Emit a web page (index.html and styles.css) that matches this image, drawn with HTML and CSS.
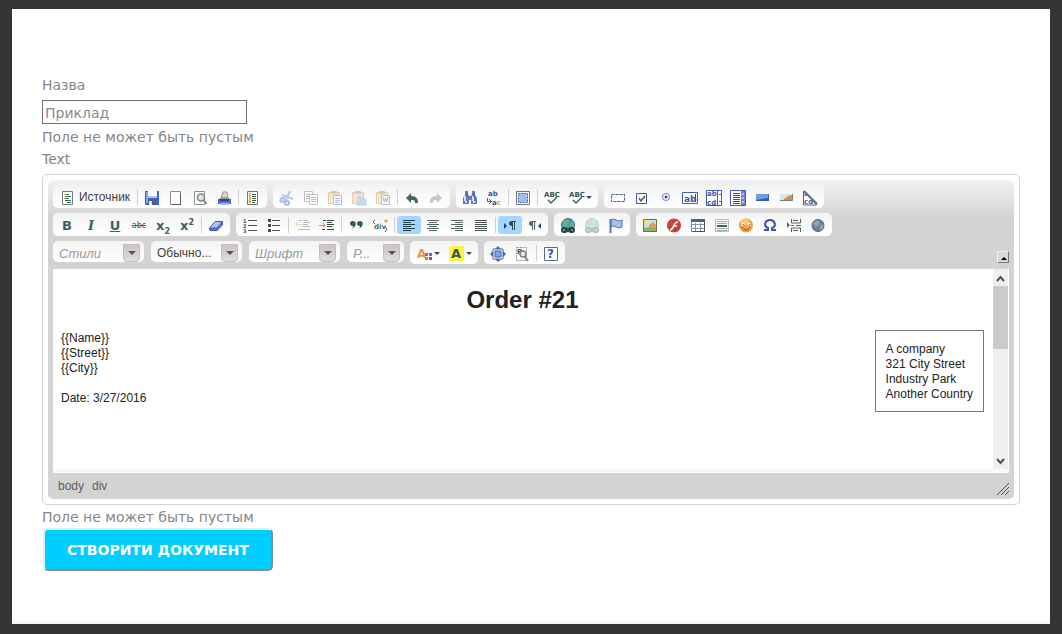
FILE: index.html
```html
<!DOCTYPE html>
<html lang="uk">
<head>
<meta charset="utf-8">
<title>Створити документ</title>
<link rel="stylesheet" href="styles.css">
</head>
<body>
<main class="page">
<form class="form">
  <label class="line" for="name">Назва</label>
  <input class="name" id="name" type="text" placeholder="Приклад">
  <p class="line">Поле не может быть пустым</p>
  <p class="line" id="text-label">Text</p>

  <section class="editor" aria-labelledby="text-label">
    <div class="chrome">
      <div class="toolbar">
        <div class="row">
          <div class="group">
            <button type="button" class="tool source"><svg class="ic" viewBox="0 0 16 16"><path d="M2.500 1.500h10v13h-10z" fill="#fff" stroke="#6d7f78"/><path d="M5 4.500h4M5 6.500h6M5 8.500h4M5 10.500h6M7 12.500h4" stroke="#3c625a"/><path d="M4 4.500h2M4 8.500h1" stroke="#e0b54a"/></svg><span>Источник</span></button>
            <i class="sep"></i>
            <button type="button" class="tool" aria-label="Сохранить"><svg class="ic" viewBox="0 0 16 16"><path d="M1 1h14v14H2l-1-1z" fill="#3a62d6"/><path d="M2 2h2v11H2z" fill="#83a6f4"/><path d="M4 1h9v7H4z" fill="#f4f8ff"/><path d="M4 6h9v2H4z" fill="#a6c9ee"/><path d="M4 10h8v5H4z" fill="#4e5f83"/><path d="M5 11h3v4H5z" fill="#dce8f8"/></svg></button>
            <button type="button" class="tool" aria-label="Новая страница"><svg class="ic" viewBox="0 0 16 16"><path d="M2.500 1.500h10v13h-10z" fill="#fff" stroke="#8c9490"/><path d="M12.500 4v11M4 14.500h9" stroke="#51635d"/></svg></button>
            <button type="button" class="tool" aria-label="Предварительный просмотр"><svg class="ic" viewBox="0 0 16 16"><path d="M2.500 1.500h10v13h-10z" fill="#fff" stroke="#8c9490"/><circle cx="9" cy="7.500" r="3.500" fill="#dfe8e8" stroke="#7b8784" stroke-width="1.500"/><path d="M11.500 10l3 4" stroke="#9c8158" stroke-width="2"/></svg></button>
            <button type="button" class="tool" aria-label="Печать"><svg class="ic" viewBox="0 0 16 16"><path d="M5 8l2-6h4l1 6z" fill="#e5d3c6" stroke="#a98f86"/><path d="M2 10l3-3h7l3 3z" fill="#9b9db4"/><path d="M2 9h13v5H2z" fill="#4d6fc8"/><path d="M4 9h9v2H4z" fill="#303f81"/><path d="M4 13h9v2H4z" fill="#a5bce9"/></svg></button>
            <i class="sep"></i>
            <button type="button" class="tool" aria-label="Шаблоны"><svg class="ic" viewBox="0 0 16 16"><path d="M2.500 1.500h10v13h-10z" fill="#fff" stroke="#6a7a74"/><path d="M5 3v10" stroke="#e0b54a" stroke-width="2"/><path d="M7 4.500h4M7 6.500h4M7 8.500h4M7 10.500h4M7 12.500h3" stroke="#3c544b"/></svg></button>
          </div>
          <div class="group">
            <button type="button" class="tool off" aria-label="Вырезать"><svg class="ic" viewBox="0 0 16 16" fill="none"><path d="M11 1L7 10M3 5l11 4" stroke="#5383c5" stroke-width="2"/><circle cx="3.500" cy="10" r="2" stroke="#3660c2" stroke-width="2"/><circle cx="8" cy="13" r="2" stroke="#3660c2" stroke-width="2"/></svg></button>
            <button type="button" class="tool off" aria-label="Копировать"><svg class="ic" viewBox="0 0 16 16" fill="#fff" stroke="#60736d"><path d="M1.500 1.500h8v10h-8z"/><path d="M6.500 4.500h8v10h-8z"/><path d="M3 4.500h3M3 6.500h3M3 8.500h3M8 7.500h5M8 9.500h5M8 11.500h5"/></svg></button>
            <button type="button" class="tool off" aria-label="Вставить"><svg class="ic" viewBox="0 0 16 16"><path d="M1.500 2.500h11v11h-11z" fill="#f0c58e" stroke="#c78a42"/><path d="M4 1h6v3H4z" fill="#8792a0"/><path d="M6.500 5.500h8v9h-8z" fill="#fff" stroke="#4a69b3"/><path d="M8 8.500h5M8 10.500h5M8 12.500h4" stroke="#4a69b3"/></svg></button>
            <button type="button" class="tool off" aria-label="Вставить только текст"><svg class="ic" viewBox="0 0 16 16"><path d="M1.500 2.500h11v11h-11z" fill="#f0c58e" stroke="#c78a42"/><path d="M4 1h6v3H4z" fill="#8792a0"/><path d="M7 7h4l4 3v5H6z" fill="#6da9e6" stroke="#6397cc"/></svg></button>
            <button type="button" class="tool off" aria-label="Вставить из Word"><svg class="ic" viewBox="0 0 16 16"><path d="M1.500 2.500h11v11h-11z" fill="#f0c58e" stroke="#c78a42"/><path d="M4 1h6v3H4z" fill="#8792a0"/><path d="M6.500 5.500h8v9h-8z" fill="#fff" stroke="#4a69b3"/><path d="M8 7l1 5 1.500-4 1.500 4 1-5" fill="none" stroke="#46536e"/></svg></button>
            <i class="sep"></i>
            <button type="button" class="tool" aria-label="Отменить"><svg class="ic" viewBox="0 0 16 16"><path d="M2 8l5-5v3c5 0 7 2 7 7h-3c0-3-1-3-4-3v3z" fill="#486760"/></svg></button>
            <button type="button" class="tool off" aria-label="Повторить"><svg class="ic" viewBox="0 0 16 16"><path d="M14 8L9 3v3c-5 0-7 2-7 7h3c0-3 1-3 4-3v3z" fill="#6b827c"/></svg></button>
          </div>
          <div class="group">
            <button type="button" class="tool" aria-label="Найти"><svg class="ic" viewBox="0 0 16 16"><path d="M3 1h3v3l1 2h2l1-2V1h3v4l2 3v6H9v-4H7v4H1V8l2-3z" fill="#6379c6"/><path d="M3 6v5M11 6v5M3 12h2M11 12h2" stroke="#d3ddff" stroke-width="2"/><path d="M5 3v4M12 3v4" stroke="#3f4ea1"/></svg></button>
            <button type="button" class="tool" aria-label="Заменить"><svg class="ic" viewBox="0 0 16 16"><text x="2" y="6" class="t7 indigo">ab</text><text x="6" y="15" class="t7 indigo">a<tspan class="gold">c</tspan></text><path d="M1.500 8v3.500H5M3 9l2.500 2.500L3 14" fill="none" stroke="#4055a9"/></svg></button>
            <i class="sep"></i>
            <button type="button" class="tool" aria-label="Выделить все"><svg class="ic" viewBox="0 0 16 16"><path d="M1.500 1.500h13v13h-13z" fill="#f6faff" stroke="#6b7b75"/><path d="M4 4h8v8H4z" fill="#a3bef0"/><path d="M3.500 3.500h9v9h-9z" fill="none" stroke="#36569b" stroke-dasharray="2 1"/></svg></button>
            <i class="sep"></i>
            <button type="button" class="tool" aria-label="Проверить орфографию"><svg class="ic" viewBox="0 0 16 16"><text x="0" y="7" class="t7 green">ABC</text><path d="M4 10l3 3 6-6" fill="none" stroke="#42645c" stroke-width="1.500"/></svg></button>
            <button type="button" class="tool wide" aria-label="Проверка по мере ввода"><svg class="ic" viewBox="0 0 16 16"><text x="0" y="7" class="t7 green">ABC</text><path d="M4 10l3 3 6-6" fill="none" stroke="#42645c" stroke-width="1.500"/></svg><i class="caret"></i></button>
          </div>
          <div class="group">
            <button type="button" class="tool" aria-label="Форма"><svg class="ic" viewBox="0 0 16 16"><path d="M1.500 4.500h13v7h-13z" fill="none" stroke="#4559b0" stroke-dasharray="3 1"/></svg></button>
            <button type="button" class="tool" aria-label="Чекбокс"><svg class="ic" viewBox="0 0 16 16" fill="none"><path d="M2.500 3.500h10v10h-10z" stroke="#4456ac"/><path d="M5 8l2 3 4-5" stroke="#50615d" stroke-width="1.500"/></svg></button>
            <button type="button" class="tool" aria-label="Радиокнопка"><svg class="ic" viewBox="0 0 16 16"><circle cx="8" cy="7" r="3.500" fill="#fff" stroke="#6b7bbb"/><circle cx="8" cy="7" r="1.500" fill="#354aa2"/></svg></button>
            <button type="button" class="tool" aria-label="Текстовое поле"><svg class="ic" viewBox="0 0 16 16"><path d="M.5 2.500h15v11H.5z" fill="#fff" stroke="#4659b8"/><text x="2" y="12" class="t9 indigo">ab</text><path d="M13.500 4v8" stroke="#354aa2"/></svg></button>
            <button type="button" class="tool" aria-label="Многострочное поле"><svg class="ic" viewBox="0 0 16 16"><path d="M.5.5h15v15H.5z" fill="#fff" stroke="#4659b8"/><text x="1" y="6" class="t7 indigo">ab</text><text x="1" y="15" class="t7 indigo">cd</text><path d="M11.500 1v14M13 4.500h2M13 11.500h2" stroke="#4659b8"/></svg></button>
            <button type="button" class="tool" aria-label="Выпадающий список"><svg class="ic" viewBox="0 0 16 16"><path d="M.5.5h15v15H.5z" fill="#fff" stroke="#4659b8"/><path d="M3 3.500h7M3 5.500h7M3 7.500h7M3 9.500h7M3 11.500h7M3 13.500h7" stroke="#40516e"/><path d="M11 1h4v14h-4z" fill="#7082ca"/><path d="M12 4h2M12 8h2M12 12h2" stroke="#fff"/></svg></button>
            <button type="button" class="tool" aria-label="Кнопка"><svg class="ic" viewBox="0 0 16 16"><path d="M2 4h13v7H2z" fill="#315eb5"/><path d="M2 4h12v4L2 10z" fill="#6f9ae6"/></svg></button>
            <button type="button" class="tool" aria-label="Кнопка-изображение"><svg class="ic" viewBox="0 0 16 16"><path d="M2 4h13v7H2z" fill="#d6e5ea"/><path d="M6 9l4-3 4-1v6H6z" fill="#dc8c47"/><path d="M2 10.500h12.500V4" fill="none" stroke="#6e8880"/></svg></button>
            <button type="button" class="tool" aria-label="Скрытое поле"><svg class="ic" viewBox="0 0 16 16"><path d="M1.500 1v14h13z" fill="#fff" stroke="#4659b8"/><text x="2" y="6" class="t6 indigo">a</text><text x="2" y="14" class="t7 indigo">cd</text><path d="M2 1l13 13" stroke="#647a77" stroke-width="2"/></svg></button>
          </div>
        </div>

        <div class="row">
          <div class="group">
            <button type="button" class="tool letter" aria-label="Полужирный"><b>B</b></button>
            <button type="button" class="tool letter" aria-label="Курсив"><em>I</em></button>
            <button type="button" class="tool letter" aria-label="Подчеркнутый"><u>U</u></button>
            <button type="button" class="tool letter" aria-label="Зачеркнутый"><s>abc</s></button>
            <button type="button" class="tool letter" aria-label="Подстрочный индекс"><span>x<sub>2</sub></span></button>
            <button type="button" class="tool letter" aria-label="Надстрочный индекс"><span>x<sup>2</sup></span></button>
            <i class="sep"></i>
            <button type="button" class="tool" aria-label="Убрать форматирование"><svg class="ic" viewBox="0 0 16 16"><path d="M2 10l5-6h7l-5 6z" fill="#aac5f5"/><path d="M2 10h7v3H2zM9 10l5-6v3l-5 6z" fill="#5b79d0"/><path d="M1.500 10L7 3.500h7.500V7L9 12.500H2zM2 10h7l5-6" fill="none" stroke="#405bae"/></svg></button>
          </div>
          <div class="group">
            <button type="button" class="tool" aria-label="Нумерованный список"><svg class="ic" viewBox="0 0 16 16"><text x="1" y="5" class="t5 green">1</text><text x="1" y="10" class="t5 green">2</text><text x="1" y="15" class="t5 green">3</text><path d="M6 2.500h9M6 7.500h9M6 12.500h9" stroke="#4a5a55"/></svg></button>
            <button type="button" class="tool" aria-label="Маркированный список"><svg class="ic" viewBox="0 0 16 16"><path d="M2 1h3v3H2zM2 6h3v3H2zM2 11h3v3H2z" fill="#3c544b"/><path d="M6 2.500h8M6 7.500h8M6 12.500h8" stroke="#4a5a55"/></svg></button>
            <i class="sep"></i>
            <button type="button" class="tool off" aria-label="Уменьшить отступ"><svg class="ic" viewBox="0 0 16 16"><path d="M4 2.500h3M8 2.500h5M8 4.500h7M8 6.500h5M8 8.500h7M3 11.500h12" stroke="#4b6860"/><path d="M7 6.500H1M3 4L1 6.500 3 9" fill="none" stroke="#dca13e"/></svg></button>
            <button type="button" class="tool" aria-label="Увеличить отступ"><svg class="ic" viewBox="0 0 16 16"><path d="M4 2.500h3M8 2.500h7M8 4.500h5M8 6.500h7M8 8.500h5M3 11.500h3M8 11.500h7" stroke="#304b43"/><path d="M0 7.500h6M4 5l2 2.500L4 10" fill="none" stroke="#dc8b2e"/></svg></button>
            <i class="sep"></i>
            <button type="button" class="tool" aria-label="Цитата"><svg class="ic" viewBox="0 0 16 16"><path d="M3 11c2-1 2-2 2-3-4 0-4-5 0-5s4 6-2 8zM10 11c2-1 2-2 2-3-4 0-4-5 0-5s4 6-2 8z" fill="#35584f"/></svg></button>
            <button type="button" class="tool" aria-label="Добавить DIV"><svg class="ic" viewBox="0 0 16 16"><path d="M3 2L1 4l2 2M13 9l2 2-2 3" fill="none" stroke="#536c65"/><text x="2" y="11" class="t7 slate">div</text><path d="M14 1l2 2-2 2-2-2z" fill="#e3a445"/></svg></button>
            <i class="sep"></i>
            <button type="button" class="tool on" aria-label="По левому краю"><svg class="ic" viewBox="0 0 16 16"><path d="M2 2.500h12M2 4.500h8M2 6.500h12M2 8.500h8M2 10.500h12M2 12.500h8" stroke="#213e4b"/></svg></button>
            <button type="button" class="tool" aria-label="По центру"><svg class="ic" viewBox="0 0 16 16"><path d="M2 2.500h12M4 4.500h8M2 6.500h12M4 8.500h8M2 10.500h12M4 12.500h8" stroke="#56645f"/></svg></button>
            <button type="button" class="tool" aria-label="По правому краю"><svg class="ic" viewBox="0 0 16 16"><path d="M2 2.500h12M6 4.500h8M2 6.500h12M6 8.500h8M2 10.500h12M6 12.500h8" stroke="#56645f"/></svg></button>
            <button type="button" class="tool" aria-label="По ширине"><svg class="ic" viewBox="0 0 16 16"><path d="M2 2.500h12M2 4.500h12M2 6.500h12M2 8.500h12M2 10.500h12M2 12.500h12" stroke="#46564f"/></svg></button>
            <i class="sep"></i>
            <button type="button" class="tool on" aria-label="Слева направо"><svg class="ic" viewBox="0 0 16 16"><path d="M2 5l3 3-3 3z" fill="#26369c"/><path d="M10 3c-4 0-4 5 0 5v4h1V4h1v8h1V4h1V3z" fill="#304b43"/></svg></button>
            <button type="button" class="tool" aria-label="Справа налево"><svg class="ic" viewBox="0 0 16 16"><path d="M15 5l-3 3 3 3z" fill="#26369c"/><path d="M6 3C2 3 2 8 6 8v4h1V4h1v8h1V4h1V3z" fill="#536862"/></svg></button>
          </div>
          <div class="group">
            <button type="button" class="tool" aria-label="Вставить ссылку"><svg class="ic" viewBox="0 0 16 16"><circle cx="8" cy="7" r="6.500" fill="#4b9fbc" stroke="#356b87"/><path d="M3 3l4-2 2 3-3 5-4-1zM10 6l4-2v5h-3z" fill="#6daf74"/><g fill="none" stroke="#29473e" stroke-width="2"><rect x="2" y="10" width="5" height="4" rx="2"/><rect x="9" y="10" width="5" height="4" rx="2"/><path d="M5 12h6"/></g></svg></button>
            <button type="button" class="tool off" aria-label="Убрать ссылку"><svg class="ic" viewBox="0 0 16 16"><circle cx="8" cy="7" r="6.500" fill="#8fc6d8" stroke="#5b91a7"/><path d="M3 3l4-2 2 3-3 5-4-1zM10 6l4-2v5h-3z" fill="#8bc091"/><g fill="none" stroke="#4b6860" stroke-width="2"><rect x="2" y="10" width="5" height="4" rx="2"/><rect x="9" y="10" width="5" height="4" rx="2"/></g></svg></button>
            <button type="button" class="tool" aria-label="Вставить якорь"><svg class="ic" viewBox="0 0 16 16"><path d="M3 2c4-3 6 3 11 0v7c-5 3-7-3-11 0z" fill="#a8c0ef" stroke="#5568bd"/><path d="M2.500 1v14" stroke="#6171b8" stroke-width="2"/></svg></button>
          </div>
          <div class="group">
            <button type="button" class="tool" aria-label="Изображение"><svg class="ic" viewBox="0 0 16 16"><path d="M1.500 1.500h13v12h-13z" fill="#c5e1ef" stroke="#647746"/><path d="M2 2h5L2 8z" fill="#f3dc69"/><path d="M2 10l12-2v5H2z" fill="#8fb267"/><path d="M7 7l4-3 3 3v3H8z" fill="#e19a58"/></svg></button>
            <button type="button" class="tool" aria-label="Flash"><svg class="ic" viewBox="0 0 16 16"><circle cx="8" cy="7.500" r="7" fill="#c5433b"/><path d="M4 12c4 0 3-8 8-8M7 8h4" fill="none" stroke="#fff" stroke-width="1.500"/></svg></button>
            <button type="button" class="tool" aria-label="Таблица"><svg class="ic" viewBox="0 0 16 16"><path d="M1.500 2.500h13v11h-13zM2 6.500h12M2 10.500h12M5.500 5v9M10.500 5v9" fill="#fff" stroke="#8290a2"/><path d="M1 1h14v3H1z" fill="#49618c"/><path d="M14.500 4v9.500H2" fill="none" stroke="#49564f"/></svg></button>
            <button type="button" class="tool" aria-label="Горизонтальная линия"><svg class="ic" viewBox="0 0 16 16"><path d="M1.500 1.500h13v12h-13z" fill="#fff" stroke="#b7beba"/><path d="M3 3.500h10M3 5.500h10M3 10.500h10M3 12.500h10" stroke="#9ba5a0"/><path d="M3 8h10" stroke="#3e6251" stroke-width="2"/></svg></button>
            <button type="button" class="tool" aria-label="Смайл"><svg class="ic" viewBox="0 0 16 16"><circle cx="8" cy="7.500" r="7" fill="#efa149"/><ellipse cx="7" cy="4" rx="4" ry="3" fill="#ffc66f"/><circle cx="5" cy="6" r="1.500" fill="#fff"/><circle cx="11" cy="6" r="1.500" fill="#fff"/><path d="M5 6.500h1M11 6.500h1M4 9c2 4 6 4 8 0" fill="none" stroke="#81512c"/></svg></button>
            <button type="button" class="tool" aria-label="Специальный символ"><svg class="ic" viewBox="0 0 16 16"><path d="M2 12h4v-2C1 8 3 2 8 2s7 6 2 8v2h4" fill="none" stroke="#4053ac" stroke-width="2"/></svg></button>
            <button type="button" class="tool" aria-label="Разрыв страницы"><svg class="ic" viewBox="0 0 16 16"><path d="M5.500 1v4h9V1M5.500 14v-4h9v4M7 2.500h5M7 12.500h5M5 7.500h3M10 7.500h5" fill="none" stroke="#52645e"/><path d="M1 4l3 3-3 3z" fill="#536b7a"/></svg></button>
            <button type="button" class="tool" aria-label="Iframe"><svg class="ic" viewBox="0 0 16 16"><circle cx="8" cy="7.500" r="6" fill="#647fa9" stroke="#56647b"/><path d="M3 5l4-3 3 2-2 4-3 1zM10 8l3-2v4l-3 2z" fill="#8fa6a4"/></svg></button>
          </div>
        </div>

        <div class="row">
          <span class="combo"><select aria-label="Стили"><option>Стили</option></select><i class="arrow"></i></span>
          <span class="combo chosen"><select aria-label="Форматирование"><option>Обычно...</option></select><i class="arrow"></i></span>
          <span class="combo"><select aria-label="Шрифт"><option>Шрифт</option></select><i class="arrow"></i></span>
          <span class="combo small"><select aria-label="Размер"><option>Р...</option></select><i class="arrow"></i></span>
          <div class="group">
            <button type="button" class="tool wide" aria-label="Цвет текста"><svg class="ic" viewBox="0 0 16 16"><text x="0" y="12" class="t12 orange">A</text><path d="M8 7h3v3H8z" fill="#e5573c"/><path d="M12 7h3v3h-3z" fill="#5470cb"/><path d="M8 11h3v3H8z" fill="#79a84d"/><path d="M12 11h3v3h-3z" fill="#a2477a"/></svg><i class="caret"></i></button>
            <button type="button" class="tool wide" aria-label="Цвет фона"><svg class="ic" viewBox="0 0 16 16"><path d="M0 0h15v15H0z" fill="#fff14d"/><text x="2" y="12" class="t13 green">A</text></svg><i class="caret"></i></button>
          </div>
          <div class="group">
            <button type="button" class="tool" aria-label="Развернуть"><svg class="ic" viewBox="0 0 16 16"><path d="M8 0l3 3H5zM8 16l3-3H5zM0 8l3-3v6zM16 8l-3-3v6z" fill="#526783"/><path d="M3 3h10v10H3z" fill="#eaf3ff" stroke="#5c7498"/><path d="M5 5h6v6H5z" fill="#7fa9ed" stroke="#3965b6"/></svg></button>
            <button type="button" class="tool" aria-label="Отображать блоки"><svg class="ic" viewBox="0 0 16 16"><path d="M2.500 1.500h10v13h-10z" fill="#fff" stroke="#8c9490" stroke-dasharray="2 1"/><text x="3" y="8" class="t7 green">P</text><circle cx="9" cy="8" r="3" fill="#e4eaea" stroke="#7b8784" stroke-width="1.500"/><path d="M11 11l3 4" stroke="#9c8158" stroke-width="2"/></svg></button>
            <i class="sep"></i>
            <button type="button" class="tool" aria-label="О редакторе"><svg class="ic" viewBox="0 0 16 16"><path d="M1.500 1.500h13v13h-13z" fill="#fff" stroke="#526a91"/><text x="4" y="12" class="t12 indigo">?</text></svg></button>
          </div>
          <button type="button" class="collapse" aria-label="Свернуть панель"></button>
        </div>
      </div>

      <div class="view">
        <article class="doc">
          <h1>Order #21</h1>
          <div class="cols">
            <p>{{Name}}<br>{{Street}}<br>{{City}}<br><br>Date: 3/27/2016</p>
            <address>A company<br>321 City Street<br>Industry Park<br>Another Country</address>
          </div>
        </article>
        <div class="scroll">
          <svg viewBox="0 0 15 17"><path d="M4 12l3.500-4 3.500 4"/></svg>
          <div class="thumb"></div>
          <svg viewBox="0 0 15 17"><path d="M4 7l3.500 4L11 7"/></svg>
        </div>
      </div>

      <div class="status">
        <a href="#">body</a><a href="#">div</a>
        <svg class="grip" viewBox="0 0 12 12"><path d="M0 12L12 0M4 12l8-8M8 12l4-4"/></svg>
      </div>
    </div>
  </section>

  <p class="line">Поле не может быть пустым</p>
  <button type="submit" class="submit">СТВОРИТИ ДОКУМЕНТ</button>
</form>
</main>
</body>
</html>
```
FILE: styles.css
```css
* { box-sizing: border-box; }

body {
  margin: 0;
  min-height: 100vh;
  padding: 9px 12px 10px;
  display: flex;
  background: #353535;
  color: #868686;
  font: 14px/22px "DejaVu Sans", Verdana, sans-serif;
}

p, h1 { margin: 0; }
button, input, select { font: inherit; color: inherit; }

.page {
  flex: 1;
  background: #fff;
  border-bottom: 3px solid #f7f7f7;
  padding: 65px 30px 50px;
}

.form { display: flex; flex-direction: column; }
.line { display: block; }

.name {
  width: 205px;
  height: 24px;
  margin: 4px 0 2px;
  padding: 2px 2px 0;
  border: 1px solid #707070;
  background: #fff;
}
.name::placeholder { color: #8a8a8a; opacity: 1; }

/* Editor frame */
.editor {
  margin: 4px 0 1px;
  padding: 5px;
  border: 1px solid #d3d3d3;
  border-radius: 5px;
}
.chrome {
  padding: 5px 5px 0;
  border-radius: 5px;
  background: linear-gradient(#f2f2f2, #d3d3d3 38px);
  font: 12px/15px "Liberation Sans", Arial, sans-serif;
}

/* Toolbar */
.toolbar { display: flex; flex-direction: column; gap: 5px; padding-bottom: 5px; }
.row { display: flex; flex-wrap: wrap; align-items: flex-start; gap: 5px 6px; }
.group {
  display: flex;
  align-items: center;
  height: 23px;
  padding: 0 2px;
  border-radius: 5px;
  background: linear-gradient(#f3f3f3, #fff);
}
.tool {
  display: flex;
  align-items: center;
  justify-content: center;
  width: 24px;
  height: 18px;
  padding: 2px 0 0;
  border: 0;
  border-radius: 3px;
  background: none;
}
.tool.source { width: 80px; gap: 3px; color: #404040; }
.tool.wide { width: 32px; gap: 1px; }
.tool.on { background: #a3d7ff; }
.tool.off .ic { opacity: 0.4; }
.ic { width: 16px; height: 16px; flex: none; }
.sep { width: 1px; height: 16px; margin: 0 2px; background: #d0d0d0; }
.caret {
  border: 3px solid transparent;
  border-top-color: #444;
  border-bottom: 0;
}

.ic text { font-family: "DejaVu Sans", sans-serif; font-weight: bold; }
.t5 { font-size: 5px; }
.t6 { font-size: 6px; }
.t7 { font-size: 7px; }
.t9 { font-size: 9px; }
.t12 { font-size: 12px; }
.t13 { font-size: 13px; }
.indigo { fill: #4055a9; }
.green { fill: #35584f; }
.slate { fill: #536c65; }
.gold { fill: #e3a02f; }
.orange { fill: #ec9647; }

.letter { color: #3f6159; font: bold 13px/16px "DejaVu Sans", sans-serif; }
.letter em { font-family: "DejaVu Serif", serif; }
.letter s { font-size: 8px; font-weight: normal; }
.letter sub, .letter sup { font-size: 8px; line-height: 0; }

/* Drop-downs */
.combo {
  position: relative;
  width: 91px;
  height: 21px;
  margin-right: 1px;
  border-radius: 5px;
  background: linear-gradient(#f3f3f3, #fff);
}
.combo.small { width: 57px; margin-right: 0; }
.combo select {
  width: 100%;
  height: 100%;
  padding: 4px 20px 0 6px;
  border: 0;
  background: none;
  appearance: none;
  color: #999;
  font-size: 13px;
  font-style: italic;
}
.combo.chosen select { color: #404040; font-size: 12px; font-style: normal; }
.arrow {
  position: absolute;
  right: 4px;
  top: 3px;
  display: flex;
  align-items: center;
  justify-content: center;
  width: 17px;
  height: 18px;
  border: 1px solid #c4bebe;
  border-radius: 0 0 4px 4px;
  background: linear-gradient(#cbc4c4, #e0dcdc);
  pointer-events: none;
}
.arrow::after {
  content: "";
  border: 4px solid transparent;
  border-top-color: #555;
  border-bottom: 0;
}

.collapse {
  display: flex;
  align-items: center;
  justify-content: center;
  width: 12px;
  height: 12px;
  margin: 10px 0 0 auto;
  padding: 2px 0 0 2px;
  border: 1px solid;
  border-color: #f2f2f2 #777 #777 #f2f2f2;
  background: #d8d8d8;
}
.collapse::after {
  content: "";
  border: 3px solid transparent;
  border-bottom-color: #000;
  border-top: 0;
}

/* Edited document */
.view {
  display: flex;
  background: #fff;
  border-bottom: 4px solid #f8f8f8;
  padding-right: 1px;
}
.doc { flex: 1; padding: 16px 9px 57px 8px; color: #222; }
.doc h1 {
  margin-bottom: 15px;
  font-size: 24px;
  line-height: 30px;
  text-align: center;
}
.cols { display: flex; justify-content: space-between; align-items: flex-start; }
.cols p { padding-top: 1px; }
address { padding: 11px 10px 9px; border: 1px solid #777; font-style: normal; }

.scroll { display: flex; flex-direction: column; width: 15px; background: #efefef; }
.scroll svg { width: 15px; height: 17px; }
.scroll svg:last-child { margin-top: auto; }
.scroll path { fill: none; stroke: #505050; stroke-width: 2; }
.thumb { height: 63px; background: #cbcbcb; }

.status {
  display: flex;
  align-items: center;
  gap: 8px;
  height: 26px;
  padding-left: 5px;
}
.status a { color: #606060; text-decoration: none; }
.grip { width: 12px; height: 12px; margin: 5px 0 0 auto; stroke: #505050; }

.submit {
  align-self: flex-start;
  height: 43px;
  margin-left: 1px;
  padding: 0 22px;
  border: 2px solid;
  border-color: #d5f4fb #7c8f96 #7c8f96 #d5f4fb;
  border-radius: 5px;
  background: #00ceff;
  color: #fff;
  font-weight: bold;
}
```
